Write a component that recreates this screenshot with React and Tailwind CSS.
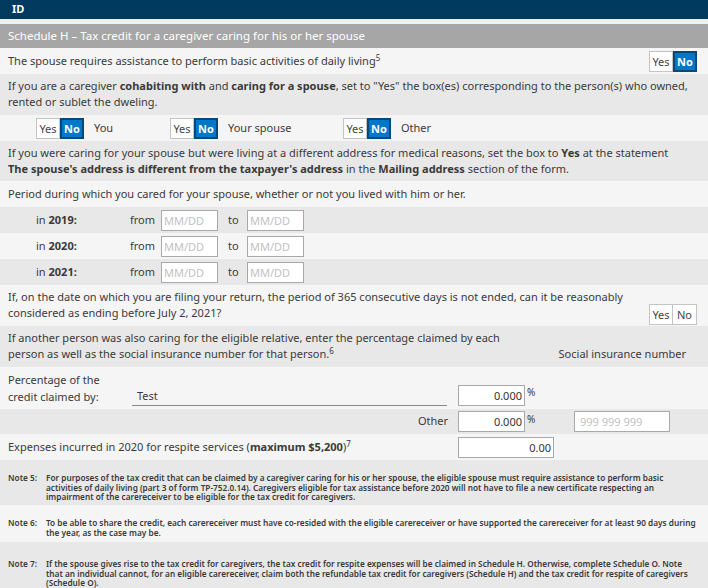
import React, { useState } from 'react'

const font = { fontFamily: '"Noto Sans", "Open Sans", sans-serif' }

function Toggle({ value, onChange }) {
  return (
    <div className="flex h-[21px] text-[11px] leading-none">
      <button
        onClick={() => onChange('yes')}
        className={
          value === 'yes'
            ? 'w-[24px] bg-[#0077c8] border-2 border-[#00497a] text-white font-bold'
            : 'w-[24px] bg-white border border-[#c4c4c4] text-[#444]'
        }
      >
        Yes
      </button>
      <button
        onClick={() => onChange('no')}
        className={
          value === 'no'
            ? 'w-[24px] bg-[#0077c8] border-2 border-[#00497a] text-white font-bold'
            : 'w-[24px] bg-white border border-l-0 border-[#c4c4c4] text-[#444]'
        }
      >
        No
      </button>
    </div>
  )
}

function DateBox() {
  return (
    <input
      placeholder="MM/DD"
      className="w-[57px] h-[21px] bg-white border border-[#a9a9a9] px-[2px] text-[11px] text-[#333] placeholder:text-[#c2c2c2] outline-none"
    />
  )
}

function AmountBox({ value, w = 'w-[67px]' }) {
  return (
    <input
      defaultValue={value}
      className={`${w} h-[21px] bg-white border border-[#a9a9a9] px-[2px] text-right text-[11px] text-[#333] outline-none`}
    />
  )
}

export default function App() {
  const [t, setT] = useState({ daily: 'no', you: 'no', spouse: 'no', other: 'no', ending: null })
  const set = (k) => (v) => setT({ ...t, [k]: v })

  const years = [
    { y: '2019', bg: 'bg-[#e8e8e8]' },
    { y: '2020', bg: 'bg-[#f5f5f5]' },
    { y: '2021', bg: 'bg-[#e8e8e8]' },
  ]

  return (
    <div style={font} className="w-[708px] h-[588px] overflow-hidden bg-[#f5f5f5] text-[11px] text-[#3a3a3a]">
      {/* top bar */}
      <div className="h-[19px] bg-[#003a5f] flex items-center px-[12px]">
        <span className="text-white font-bold text-[11px]">ID</span>
      </div>
      <div className="h-[5px] bg-[#f0f0f0]" />

      {/* section title */}
      <div className="h-[24px] bg-[#a6a6a6] flex items-center px-[8px] text-white text-[11.5px]">
        Schedule H – Tax credit for a caregiver caring for his or her spouse
      </div>

      <div className="h-[26px] flex items-center justify-between px-[8px] pr-[11px]">
        <span>
          The spouse requires assistance to perform basic activities of daily living<sup className="text-[8px]">5</sup>
        </span>
        <Toggle value={t.daily} onChange={set('daily')} />
      </div>

      <div className="h-[41px] bg-[#e8e8e8] px-[8px] pt-[4px] leading-[16px]">
        If you are a caregiver <b>cohabiting with</b> and <b>caring for a spouse</b>, set to "Yes" the box(es) corresponding to the person(s) who owned, rented or sublet the dweling.
      </div>

      <div className="h-[26px] flex items-center pl-[36px]">
        <Toggle value={t.you} onChange={set('you')} />
        <span className="ml-[10px] w-[76px]">You</span>
        <Toggle value={t.spouse} onChange={set('spouse')} />
        <span className="ml-[10px] w-[115px]">Your spouse</span>
        <Toggle value={t.other} onChange={set('other')} />
        <span className="ml-[10px]">Other</span>
      </div>

      <div className="h-[40px] bg-[#e8e8e8] px-[8px] pt-[4px] leading-[16px]">
        If you were caring for your spouse but were living at a different address for medical reasons, set the box to <b>Yes</b> at the statement
        <br />
        <b>The spouse's address is different from the taxpayer's address</b> in the <b>Mailing address</b> section of the form.
      </div>

      <div className="h-[26px] flex items-center px-[8px]">
        Period during which you cared for your spouse, whether or not you lived with him or her.
      </div>

      {years.map((r) => (
        <div key={r.y} className={`h-[26px] ${r.bg} flex items-center`}>
          <span className="ml-[36px] w-[94px]">
            in <b>{r.y}:</b>
          </span>
          <span className="w-[31px]">from</span>
          <DateBox />
          <span className="ml-[10px] w-[19px]">to</span>
          <DateBox />
        </div>
      ))}

      <div className="h-[41px] flex px-[8px] pt-[4px] leading-[16px]">
        <div className="flex-1">
          If, on the date on which you are filing your return, the period of 365 consecutive days is not ended, can it be reasonably considered as ending before July 2, 2021?
        </div>
        <div className="self-end mb-[1px] ml-[8px] mr-[3px]">
          <Toggle value={t.ending} onChange={set('ending')} />
        </div>
      </div>

      <div className="h-[41px] bg-[#e8e8e8] px-[8px] pt-[4px] leading-[16px] flex">
        <div className="w-[510px]">
          If another person was also caring for the eligible relative, enter the percentage claimed by each person as well as the social insurance number for that person.<sup className="text-[8px]">6</sup>
        </div>
        <div className="flex-1 self-end pb-[5px] text-right pr-[14px]">Social insurance number</div>
      </div>

      <div className="h-[42px] flex items-center px-[8px] leading-[17px]">
        <div className="w-[124px]">
          Percentage of the
          <br />
          credit claimed by:
        </div>
        <div className="w-[315px] h-[20px] mt-[16px] border-b border-[#8a8a8a] pl-[5px] flex items-center">Test</div>
        <div className="ml-[11px] self-end mb-[3px] flex">
          <AmountBox value="0.000" />
          <span className="ml-[2px] text-[10px] leading-[14px]">%</span>
        </div>
      </div>

      <div className="h-[25px] bg-[#e8e8e8] flex items-center">
        <span className="w-[458px] text-right pr-[10px]">Other</span>
        <AmountBox value="0.000" />
        <span className="ml-[2px] self-start mt-[3px] text-[10px] leading-[14px] w-[47px]">%</span>
        <input
          placeholder="999 999 999"
          className="w-[96px] h-[21px] bg-white border border-[#a9a9a9] px-[5px] text-[11px] placeholder:text-[#c2c2c2] outline-none"
        />
      </div>

      <div className="h-[26px] flex items-center px-[8px]">
        <span className="w-[450px]">
          Expenses incurred in 2020 for respite services (<b>maximum $5,200</b>)<sup className="text-[8px]">7</sup>
        </span>
        <AmountBox value="0.00" w="w-[96px]" />
      </div>

      {/* notes */}
      <div className="text-[8.25px] leading-[9.5px] font-semibold text-[#3a3a3a]">
        <div className="h-[45px] bg-[#e8e8e8] flex pl-[8px] pr-[2px] pt-[13px]">
          <span className="w-[38px] shrink-0">Note 5:</span>
          <span>
            For purposes of the tax credit that can be claimed by a caregiver caring for his or her spouse, the eligible spouse must require assistance to perform basic
            <br />
            activities of daily living (part 3 of form TP-752.0.14). Caregivers eligible for tax assistance before 2020 will not have to file a new certificate respecting an
            <br />
            impairment of the carereceiver to be eligible for the tax credit for caregivers.
          </span>
        </div>
        <div className="h-[37px] flex pl-[8px] pr-[2px] pt-[13px]">
          <span className="w-[38px] shrink-0">Note 6:</span>
          <span>
            To be able to share the credit, each carereceiver must have co-resided with the eligible carereceiver or have supported the carereceiver for at least 90 days during
            <br />
            the year, as the case may be.
          </span>
        </div>
        <div className="h-[46px] bg-[#e8e8e8] flex pl-[8px] pr-[2px] pt-[17px]">
          <span className="w-[38px] shrink-0">Note 7:</span>
          <span>
            If the spouse gives rise to the tax credit for caregivers, the tax credit for respite expenses will be claimed in Schedule H. Otherwise, complete Schedule O. Note
            <br />
            that an individual cannot, for an eligible carereceiver, claim both the refundable tax credit for caregivers (Schedule H) and the tax credit for respite of caregivers
            <br />
            (Schedule O).
          </span>
        </div>
      </div>
    </div>
  )
}
